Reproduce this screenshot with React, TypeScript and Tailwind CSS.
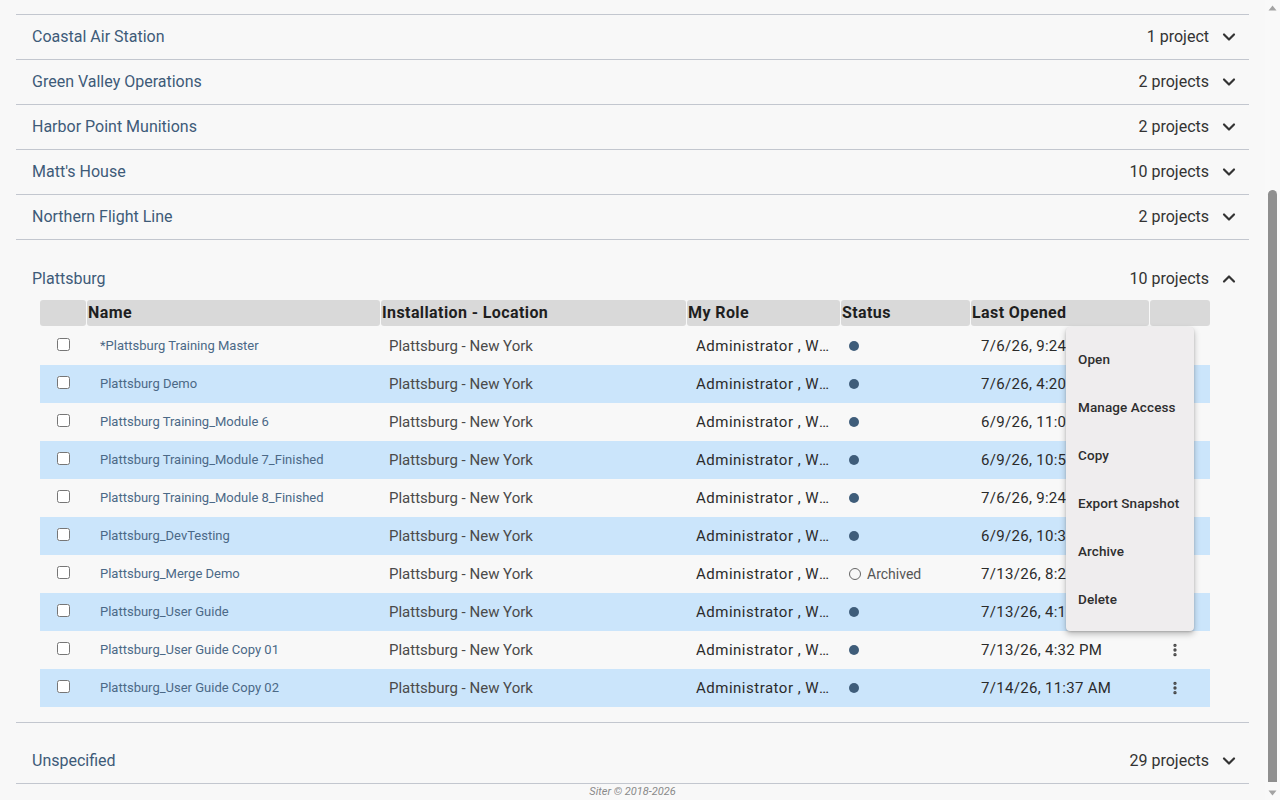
import { ChevronDown, ChevronUp, EllipsisVertical } from 'lucide-react'

interface Group {
  name: string
  count: string
}

interface Project {
  name: string
  status: 'active' | 'archived'
  opened: string
}

const before: Group[] = [
  { name: 'Delta Army Depot', count: '3 projects' },
  { name: 'Coastal Air Station', count: '1 project' },
  { name: 'Green Valley Operations', count: '2 projects' },
  { name: 'Harbor Point Munitions', count: '2 projects' },
  { name: "Matt's House", count: '10 projects' },
  { name: 'Northern Flight Line', count: '2 projects' },
]

const projects: Project[] = [
  { name: '*Plattsburg Training Master', status: 'active', opened: '7/6/26, 9:24 AM' },
  { name: 'Plattsburg Demo', status: 'active', opened: '7/6/26, 4:20 PM' },
  { name: 'Plattsburg Training_Module 6', status: 'active', opened: '6/9/26, 11:02 AM' },
  { name: 'Plattsburg Training_Module 7_Finished', status: 'active', opened: '6/9/26, 10:51 AM' },
  { name: 'Plattsburg Training_Module 8_Finished', status: 'active', opened: '7/6/26, 9:24 AM' },
  { name: 'Plattsburg_DevTesting', status: 'active', opened: '6/9/26, 10:37 AM' },
  { name: 'Plattsburg_Merge Demo', status: 'archived', opened: '7/13/26, 8:21 AM' },
  { name: 'Plattsburg_User Guide', status: 'active', opened: '7/13/26, 4:14 PM' },
  { name: 'Plattsburg_User Guide Copy 01', status: 'active', opened: '7/13/26, 4:32 PM' },
  { name: 'Plattsburg_User Guide Copy 02', status: 'active', opened: '7/14/26, 11:37 AM' },
]

const menuItems = ['Open', 'Manage Access', 'Copy', 'Export Snapshot', 'Archive', 'Delete']

function GroupRow({ group }: { group: Group }) {
  return (
    <div className="flex h-[45px] items-center border-b border-[#c3c7cf] pl-4 pr-2">
      <span className="flex-1 text-[16px] text-[#3e5b78]">{group.name}</span>
      <div className="flex items-center gap-2">
        <span className="text-[16px] text-[#333]">{group.count}</span>
        <span className="flex h-6 w-6 items-center justify-center text-[#333]">
          <ChevronDown size={20} strokeWidth={2.6} />
        </span>
      </div>
    </div>
  )
}

function ProjectTable() {
  const headers = [
    { label: '', w: 'w-[46px]' },
    { label: 'Name', w: 'w-[293px]' },
    { label: 'Installation - Location', w: 'w-[305px]' },
    { label: 'My Role', w: 'w-[153px]' },
    { label: 'Status', w: 'w-[129px]' },
    { label: 'Last Opened', w: 'w-[178px]' },
    { label: '', w: 'w-[60px]' },
  ]

  return (
    <div className="relative w-[1170px]">
      <div className="mb-px flex h-[26px] gap-px">
        {headers.map((h, i) => (
          <div
            key={i}
            className={`${h.w} flex items-center rounded-[3px] bg-[#d9d9d9] pl-px text-[16px] font-bold tracking-[0.4px] text-[#1f1f1f]`}
          >
            {h.label}
          </div>
        ))}
      </div>
      {projects.map((p, i) => (
        <div key={p.name} className={`flex h-[38px] items-center gap-px ${i % 2 === 1 ? 'bg-[#cbe5fb]' : ''}`}>
          <div className="flex w-[46px] justify-center pb-[3px]">
            <input type="checkbox" className="h-[13px] w-[13px]" />
          </div>
          <div className="w-[293px] truncate pl-[13px] text-[13px] text-[#4b6987]">{p.name}</div>
          <div className="w-[305px] pl-2 text-[15px] text-[#4a4a4a]">Plattsburg - New York</div>
          <div className="w-[153px] truncate pl-[9px] pr-1 text-[15px] tracking-[0.5px] text-[#2b2b2b]">
            Administrator , Workspace Owner
          </div>
          <div className="flex w-[129px] items-center pl-2">
            {p.status === 'active' ? (
              <span className="h-[10px] w-[10px] rounded-full bg-[#3f5d7a]" />
            ) : (
              <span className="flex items-center gap-[6px]">
                <span className="h-[12px] w-[12px] rounded-full border border-[#666]" />
                <span className="text-[14px] text-[#555]">Archived</span>
              </span>
            )}
          </div>
          <div className="w-[178px] pl-[10px] text-[15px] tracking-[0.3px] text-[#2b2b2b]">{p.opened}</div>
          <div className="flex w-[60px] items-center pl-[17px] text-[#444]">
            <EllipsisVertical size={16} strokeWidth={3} />
          </div>
        </div>
      ))}

      <div className="absolute left-[1026px] top-[27px] w-[128px] rounded bg-[#efedee] py-2 shadow-[0_3px_6px_rgba(0,0,0,0.25),0_1px_2px_rgba(0,0,0,0.15)]">
        {menuItems.map(m => (
          <div key={m} className="flex h-12 items-center px-3 text-[13.5px] font-medium tracking-[0.1px] text-[#2e2e2e]">
            {m}
          </div>
        ))}
      </div>
    </div>
  )
}

function Scrollbar() {
  return (
    <div className="flex w-[15px] flex-col bg-[#f9f9f9]">
      <div className="flex h-[15px] items-center justify-center">
        <svg width="9" height="6" viewBox="0 0 9 6"><path d="M4.5 0.5 L8.5 5.5 L0.5 5.5 Z" fill="#a3a3a3" /></svg>
      </div>
      <div className="flex flex-1 flex-col items-center pb-[3px] pt-[175px]">
        <div className="w-[9px] flex-1 rounded-t-full rounded-b-[4px] bg-[#8f8f8f]" />
      </div>
      <div className="flex h-[15px] items-center justify-center">
        <svg width="9" height="6" viewBox="0 0 9 6"><path d="M0.5 0.5 L8.5 0.5 L4.5 5.5 Z" fill="#a3a3a3" /></svg>
      </div>
    </div>
  )
}

export default function App() {
  return (
    <div className="flex h-screen overflow-hidden bg-[#f8f8f8]" style={{ fontFamily: 'Roboto, "Liberation Sans", sans-serif' }}>
      <div className="flex-1 overflow-hidden">
        <div className="-mt-[30px] px-4">
          {before.map(g => (
            <GroupRow key={g.name} group={g} />
          ))}

          <div className="border-b border-[#c3c7cf] pb-[15px] pt-[15px]">
            <div className="flex h-[45px] items-center pl-4 pr-2 pt-[2px]">
              <span className="flex-1 text-[16px] text-[#3e5b78]">Plattsburg</span>
              <div className="flex items-center gap-2">
                <span className="text-[16px] text-[#333]">10 projects</span>
                <span className="flex h-6 w-6 items-center justify-center text-[#333]">
                  <ChevronUp size={20} strokeWidth={2.6} />
                </span>
              </div>
            </div>
            <div className="pl-6">
              <ProjectTable />
            </div>
          </div>

          <div className="pt-4">
            <GroupRow group={{ name: 'Unspecified', count: '29 projects' }} />
          </div>
        </div>
        <div className="text-center text-[11px] italic leading-[15px] text-[#8a8a8a]">Siter © 2018-2026</div>
      </div>
      <Scrollbar />
    </div>
  )
}
